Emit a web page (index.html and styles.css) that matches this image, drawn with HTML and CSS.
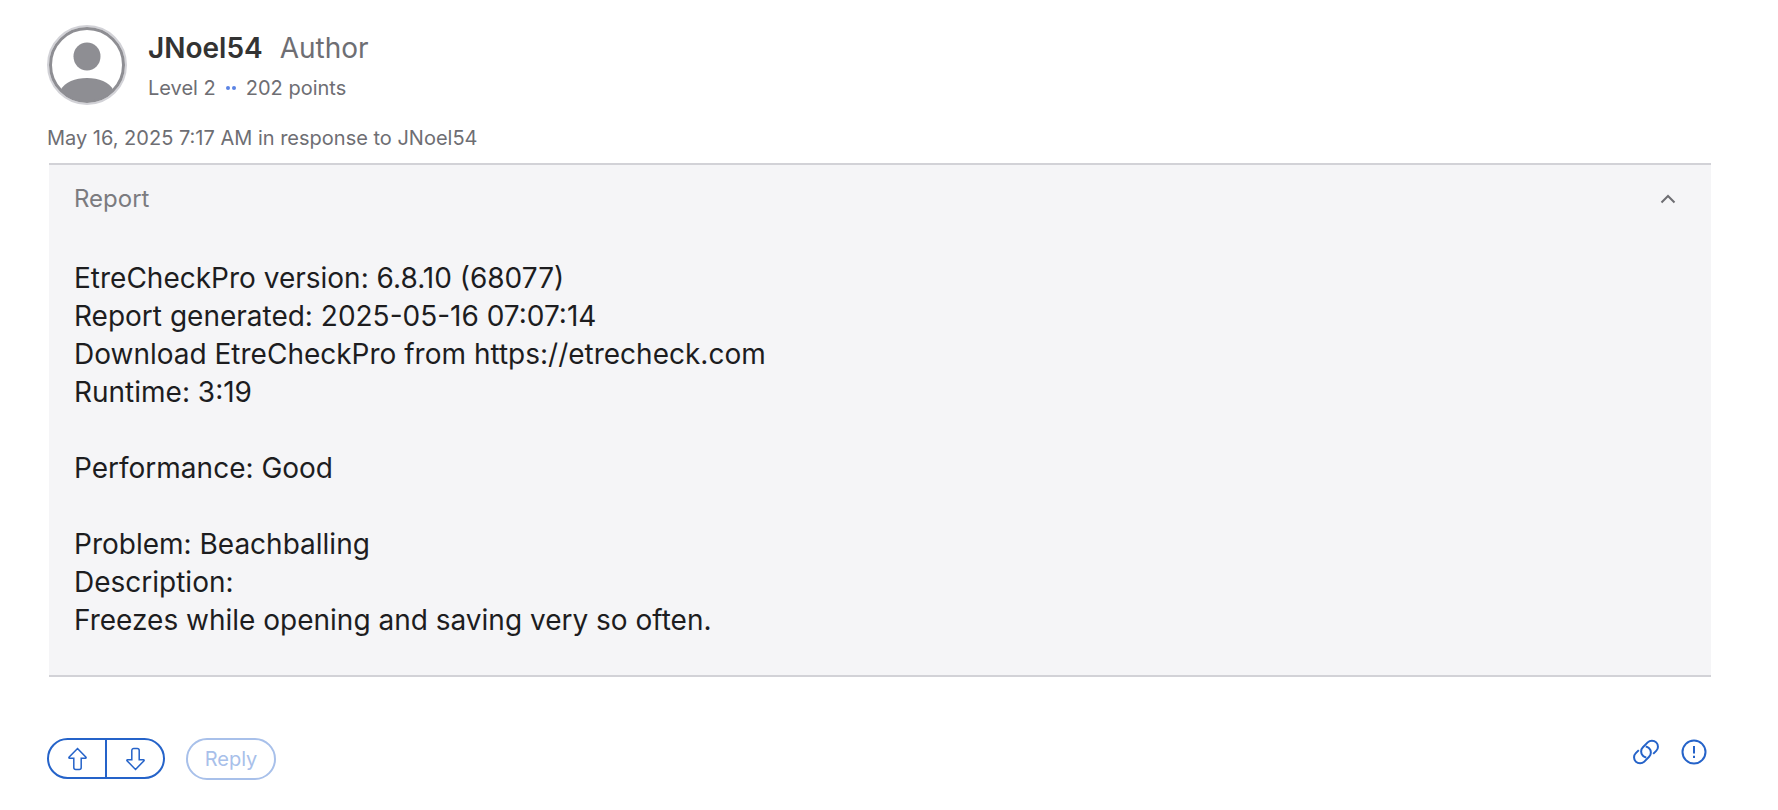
FILE: index.html
```html
<!DOCTYPE html>
<html lang="en">
<head>
<meta charset="UTF-8">
<meta name="viewport" content="width=device-width, initial-scale=1.0">
<title>Community Reply</title>
<link rel="stylesheet" href="styles.css">
</head>
<body>
    <article class="reply">
        <header class="author">
            <svg class="avatar" viewBox="0 0 80 80" role="img" aria-label="Profile picture">
                <circle cx="40" cy="40" r="39" fill="#fff" stroke="#d2d2d7" stroke-width="2"/>
                <circle cx="40" cy="40" r="36.5" fill="#fff" stroke="#8e8e93" stroke-width="3"/>
                <ellipse cx="40" cy="31.500" rx="13.500" ry="14" fill="#8e8e93"/>
                <path d="M13.500 65C18 57 28 53 40 53s22 4 26.500 12A37.500 37.500 0 0 1 13.500 65z" fill="#8e8e93"/>
            </svg>
            <div class="author-info">
                <div class="author-name">
                    <strong>JNoel54</strong>
                    <span>Author</span>
                </div>
                <div class="author-level">
                    <span>Level 2</span>
                    <svg class="level-dots" viewBox="0 0 10 4" aria-hidden="true">
                        <circle cx="2" cy="2" r="2"/>
                        <circle cx="8" cy="2" r="2"/>
                    </svg>
                    <span>202 points</span>
                </div>
            </div>
        </header>

        <p class="posted">May 16, 2025 7:17 AM in response to JNoel54</p>

        <section class="report">
            <button type="button" class="report-toggle" aria-expanded="true" aria-controls="report-text">
                <span>Report</span>
                <svg class="chevron" viewBox="0 0 16 10" aria-hidden="true">
                    <path d="M1.500 8.500 8 2l6.500 6.500"/>
                </svg>
            </button>
            <div id="report-text" class="report-text">
                <p>
                    EtreCheckPro version: 6.8.10 (68077)<br>
                    Report generated: 2025-05-16 07:07:14<br>
                    Download EtreCheckPro from https://etrecheck.com<br>
                    Runtime: 3:19
                </p>
                <p>Performance: Good</p>
                <p>
                    Problem: Beachballing<br>
                    Description:<br>
                    Freezes while opening and saving very so often.
                </p>
            </div>
        </section>

        <footer class="actions">
            <div class="votes">
                <button type="button" class="vote" aria-label="Upvote">
                    <svg viewBox="0 0 20 24" aria-hidden="true">
                        <path d="M10.500 1.500 19 10.300Q19.500 11.200 18.500 11.200H14.200V20.500a2 2 0 0 1-2 2H8.800a2 2 0 0 1-2-2V11.200H2.500Q1.500 11.200 2 10.300z"/>
                    </svg>
                </button>
                <button type="button" class="vote" aria-label="Downvote">
                    <svg viewBox="0 0 20 24" aria-hidden="true">
                        <path d="M10.500 22.500 19 13.700Q19.500 12.800 18.500 12.800H14.200V3.500a2 2 0 0 0-2-2H8.800a2 2 0 0 0-2 2V12.800H2.500Q1.500 12.800 2 13.700z"/>
                    </svg>
                </button>
            </div>
            <button type="button" class="reply-button" disabled>Reply</button>
            <div class="tools">
                <button type="button" class="tool" aria-label="Copy link">
                    <svg viewBox="0 0 26 26" aria-hidden="true">
                        <path d="M5.800 11.100 2.800 14.100a6 6 0 0 0 0 8.500 6 6 0 0 0 8.500 0l4.800-4.800a6 6 0 0 0 0-8.500 6 6 0 0 0-3.400-1.700"/>
                        <path d="M20.200 14.900 23.200 11.900a6 6 0 0 0 0-8.500 6 6 0 0 0-8.500 0l-4.800 4.800a6 6 0 0 0 0 8.500 6 6 0 0 0 3.400 1.700"/>
                    </svg>
                </button>
                <button type="button" class="tool" aria-label="Report this post">
                    <svg viewBox="0 0 26 26" aria-hidden="true">
                        <circle cx="13" cy="13" r="11.500"/>
                        <path d="M13 7v7.500M13 16.800v2.200"/>
                    </svg>
                </button>
            </div>
        </footer>
    </article>
</body>
</html>
```
FILE: styles.css
```css
body {
    margin: 0;
    background-color: #fff;
    color: #1d1d1f;
    font-family: Inter, "Liberation Sans", sans-serif;
}

p {
    margin: 0;
}

button {
    padding: 0;
    border: none;
    background: none;
    font-family: inherit;
    cursor: pointer;
}

svg {
    display: block;
    overflow: visible;
}

.reply {
    padding: 25px 67px 30px 47px;
}

/* author */
.author {
    display: flex;
    align-items: flex-start;
    gap: 21px;
}

.avatar {
    width: 80px;
    height: 80px;
}

.author-info {
    padding-top: 5px;
}

.author-name {
    display: flex;
    gap: 17px;
    font-size: 28px;
    line-height: 36px;
    color: #6e6e73;
}

.author-name strong {
    font-weight: 600;
    color: #333;
}

.author-level {
    display: flex;
    align-items: center;
    gap: 10px;
    margin-top: 8px;
    font-size: 20px;
    line-height: 28px;
    color: #6e6e73;
}

.level-dots {
    width: 10px;
    height: 4px;
    fill: #5b84e4;
}

.posted {
    margin-top: 19px;
    font-size: 20px;
    line-height: 28px;
    color: #6e6e73;
}

/* report */
.report {
    margin: 11px 0 0 2px;
    padding: 20px 25px 36px;
    border-top: 2px solid #d2d2d7;
    border-bottom: 2px solid #d2d2d7;
    background-color: #f5f5f7;
}

.report-toggle {
    display: flex;
    align-items: center;
    justify-content: space-between;
    width: 100%;
    padding-right: 10px;
    font-size: 24px;
    line-height: 28px;
    color: #7b7b7f;
}

.chevron {
    width: 16px;
    height: 10px;
    fill: none;
    stroke: #6e6e73;
    stroke-width: 2;
}

.report-text {
    margin-top: 46px;
    font-size: 28px;
    line-height: 38px;
}

.report-text p + p {
    margin-top: 38px;
}

/* buttons under the post */
.actions {
    display: flex;
    align-items: flex-start;
    margin-top: 61px;
}

.votes {
    display: flex;
    box-sizing: border-box;
    width: 118px;
    height: 41px;
    border: 2px solid #2563c9;
    border-radius: 21px;
}

.vote {
    display: flex;
    flex: 1;
    align-items: center;
    justify-content: center;
}

.vote + .vote {
    border-left: 2px solid #2563c9;
}

.vote svg {
    width: 20px;
    height: 24px;
    fill: none;
    stroke: #2563c9;
    stroke-width: 1.5;
}

.reply-button {
    width: 90px;
    height: 42px;
    margin-left: 21px;
    border: 2px solid #a8c0ea;
    border-radius: 21px;
    font-size: 20px;
    color: #a8c0ea;
    cursor: default;
}

.tools {
    display: flex;
    gap: 22px;
    margin: 1px 4px 0 auto;
}

.tool svg {
    width: 26px;
    height: 26px;
    fill: none;
    stroke: #2563c9;
    stroke-width: 2;
}
```
